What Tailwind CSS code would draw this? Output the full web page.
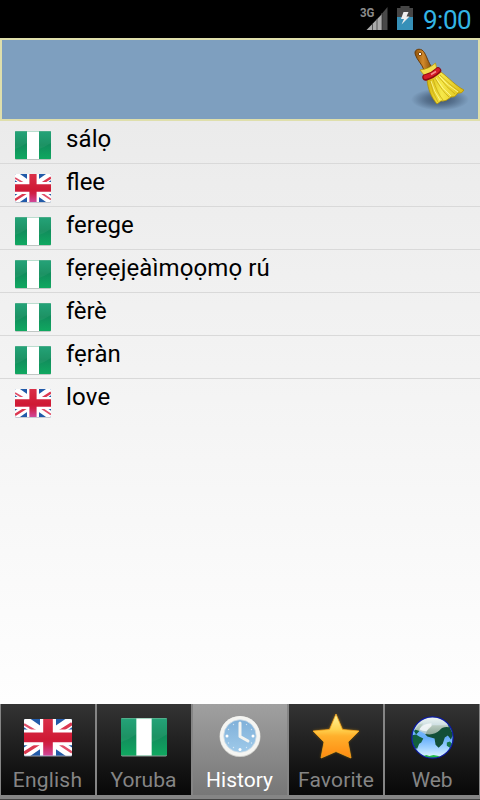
<!DOCTYPE html>
<html lang="en">
<head>
<meta charset="utf-8">
<title>Dictionary</title>
<script src="https://cdn.jsdelivr.net/npm/@tailwindcss/browser@4"></script>
</head>
<body class="w-[480px] h-[800px] overflow-hidden bg-black font-[Roboto,'Noto_Sans',sans-serif]">
<svg class="absolute h-0 w-0" aria-hidden="true">
  <defs>
    <linearGradient id="green" x1="0" y1="0" x2="0" y2="1"><stop offset="0" stop-color="#1a9e72"/><stop offset=".5" stop-color="#118d5c"/><stop offset="1" stop-color="#10a860"/></linearGradient>
    <linearGradient id="red" gradientUnits="userSpaceOnUse" x1="0" y1="0" x2="0" y2="28"><stop offset="0" stop-color="#da3048"/><stop offset=".55" stop-color="#cf1a34"/><stop offset=".7" stop-color="#d02048"/><stop offset="1" stop-color="#d0489a"/></linearGradient>
    <linearGradient id="star" x1="0" y1="0" x2="0" y2="1"><stop offset="0" stop-color="#fff6a0"/><stop offset=".35" stop-color="#ffd24e"/><stop offset=".5" stop-color="#ffb02c"/><stop offset="1" stop-color="#ff8a10"/></linearGradient>
    <linearGradient id="handle" x1="0" y1="0" x2="1" y2="0"><stop offset="0" stop-color="#8f5209"/><stop offset=".5" stop-color="#d28a2c"/><stop offset="1" stop-color="#8f5209"/></linearGradient>
    <linearGradient id="straw" x1="0" y1="0" x2="1" y2="0"><stop offset="0" stop-color="#d8b80c"/><stop offset=".4" stop-color="#f6e94a"/><stop offset="1" stop-color="#dcba10"/></linearGradient>
    <radialGradient id="shade"><stop offset="0" stop-color="#25364c" stop-opacity=".75"/><stop offset=".5" stop-color="#30445e" stop-opacity=".5"/><stop offset="1" stop-color="#30445e" stop-opacity="0"/></radialGradient>
    <linearGradient id="sea" x1="0" y1="0" x2="0" y2="1"><stop offset="0" stop-color="#8fc4fa"/><stop offset=".5" stop-color="#66aefb"/><stop offset=".75" stop-color="#a0d2ff"/><stop offset="1" stop-color="#e6f8ff"/></linearGradient>
    <linearGradient id="gloss" x1="0" y1="0" x2="0" y2="1"><stop offset="0" stop-color="#f4faf4" stop-opacity=".95"/><stop offset="1" stop-color="#c4cec4" stop-opacity=".7"/></linearGradient>
    <linearGradient id="dial" x1="0" y1="0" x2="0" y2="1"><stop offset="0" stop-color="#7fb0d9"/><stop offset="1" stop-color="#9fcaea"/></linearGradient>
    <clipPath id="round"><rect width="36" height="28" rx="1"/></clipPath>
    <clipPath id="globe"><circle cx="21" cy="21" r="20"/></clipPath>
    <filter id="glow" x="-.3" y="-.3" width="1.6" height="1.6"><feGaussianBlur stdDeviation="1.5"/></filter>
  </defs>
  <symbol id="ng" viewBox="0 0 36 29" preserveAspectRatio="none">
    <rect y=".6" width="36" height="28" rx="1" fill="#8d9b95"/>
    <g clip-path="url(#round)"><rect width="36" height="28" fill="url(#green)"/><path d="M0 18Q6 16 12 12V0H0zM24 18Q30 16 36 12V0H24z" fill="#fff" opacity=".05"/><rect x="12" width="12" height="28" fill="#fff"/><rect width="36" height=".8" fill="#6fb79a" opacity=".6"/></g>
  </symbol>
  <symbol id="uk" viewBox="0 0 36 29" preserveAspectRatio="none">
    <rect y=".6" width="36" height="28" rx="1" fill="#999fb0"/>
    <g clip-path="url(#round)"><rect width="36" height="28" fill="#225ba9"/><path d="M-2 0L38 28M38 0L-2 28" stroke="#fff" stroke-width="8"/><path d="M0 4L10 10M36 25.500L27 19.500" stroke="#e0506a" stroke-width="1.800"/><path d="M36 3.500L26 10M0 26L11 19" stroke="#dc3850" stroke-width="2.400"/><path d="M18 0V28M0 14H36" stroke="#fff" stroke-width="12"/><path d="M14.400 0H21.600V28H14.400zM0 10.300H36V17.700H0z" fill="url(#red)"/></g>
  </symbol>
</svg>

<div class="flex h-full flex-col">
  <header class="flex h-[38px] shrink-0 items-start justify-end bg-black pr-[9px]">
    <svg class="mt-1 mr-[8px] h-[28px] w-[29px]" viewBox="0 0 29 28">
      <text x="0" y="13" font-size="13" font-weight="700" textLength="14.500" lengthAdjust="spacingAndGlyphs" fill="#8b8b8b">3G</text>
      <path d="M6.500 26L22 10V26z" fill="#aaa"/><path d="M22.500 9L27.500 3V26H22.500z" fill="#484848"/>
      <path d="M12.500 20V26M17 15V26M22 9V26" stroke="#555" stroke-width="1"/>
    </svg>
    <svg class="mt-[6px] mr-[10px] h-[24px] w-[16px]" viewBox="0 0 16 24">
      <path d="M3.500 0H12.500V2H16V11H0V2H3.500z" fill="#464646"/><path d="M0 11H16V24H0z" fill="#3690b8"/>
      <path d="M6.500 6H11.500L9.500 10.500H12.500L4.500 18.500L7 13H4z" fill="#eee"/>
    </svg>
    <span class="mt-[5px] block w-[48px] whitespace-nowrap text-[26px] leading-[30px] tracking-[-0.5px] text-[#33b5e5]">9:00</span>
  </header>

  <section class="flex h-[83px] shrink-0 justify-end border-2 border-[#dfdfac] bg-[#7e9fbf] pr-[7px]">
    <svg class="mt-[4px] h-[68px] w-[60px]" viewBox="0 0 60 68">
      <ellipse cx="29" cy="55.500" rx="29" ry="11" fill="url(#shade)"/>
      <path d="M4.500 11C2.500 6 7 4 11 6C15 9 16 16 20 22L13 26C11 20 6 16 4.500 11z" fill="url(#handle)" stroke="#6d3d08" stroke-width="1"/>
      <circle cx="9" cy="10" r="1.700" fill="#fff" stroke="#7b4509"/>
      <path d="M9 26Q18 25 24.500 19L26 26Q20 31 13 31z" fill="#f3dd4e" stroke="#b79a09" stroke-width=".8"/>
      <path d="M16 36L30 28C38 34 45 42 53 46Q51 50 47 49Q44 54 40 53Q35 58 30 57L26 60C20 53 17 45 16 36z" fill="url(#straw)" stroke="#b18f06" stroke-width=".8"/>
      <path d="M19 36Q21 49 27 58M22 35Q26 49 32 56M24 34Q31 47 38 53M27 32Q36 44 44 50M29 31Q39 41 49 48" fill="none" stroke="#c9aa14" stroke-width=".8"/>
      <path d="M20 37Q23 48 29 56M25 34Q31 45 40 52M28 32Q37 42 47 48" fill="none" stroke="#fff9a0" stroke-width=".8"/>
      <path d="M14.500 33.500Q22 31.500 27 26.500" fill="none" stroke="#8d0a10" stroke-width="6.500" stroke-linecap="round"/>
      <path d="M14.500 33Q22 31 27 26" fill="none" stroke="#d51c28" stroke-width="4" stroke-linecap="round"/>
      <path d="M20 30.500L25 27.500" stroke="#f78d8d" stroke-width="1.500"/>
    </svg>
  </section>

  <main class="h-[583px] shrink-0 bg-linear-to-b from-[#ebebeb] to-[#fefefe] text-[24px] leading-[28px] text-black">
    <div class="flex h-[43px] border-b border-[#d9d9d9] pl-[15px]"><svg class="mt-[10px] mr-[15px] h-[29px] w-[36px]"><use href="#ng"/></svg><span class="mt-[4px] tracking-[0.1px]">sálọ</span></div>
    <div class="flex h-[43px] border-b border-[#d9d9d9] pl-[15px]"><svg class="mt-[10px] mr-[15px] h-[29px] w-[36px]"><use href="#uk"/></svg><span class="mt-[4px]">flee</span></div>
    <div class="flex h-[43px] border-b border-[#d9d9d9] pl-[15px]"><svg class="mt-[10px] mr-[15px] h-[29px] w-[36px]"><use href="#ng"/></svg><span class="mt-[4px]">ferege</span></div>
    <div class="flex h-[43px] border-b border-[#d9d9d9] pl-[15px]"><svg class="mt-[10px] mr-[15px] h-[29px] w-[36px]"><use href="#ng"/></svg><span class="mt-[4px] tracking-[0.1px]">fẹrẹẹjẹàìmọọmọ rú</span></div>
    <div class="flex h-[43px] border-b border-[#d9d9d9] pl-[15px]"><svg class="mt-[10px] mr-[15px] h-[29px] w-[36px]"><use href="#ng"/></svg><span class="mt-[4px] tracking-[-0.2px]">fèrè</span></div>
    <div class="flex h-[43px] border-b border-[#d9d9d9] pl-[15px]"><svg class="mt-[10px] mr-[15px] h-[29px] w-[36px]"><use href="#ng"/></svg><span class="mt-[4px]">fẹràn</span></div>
    <div class="flex h-[43px] pl-[15px]"><svg class="mt-[10px] mr-[15px] h-[29px] w-[36px]"><use href="#uk"/></svg><span class="mt-[4px] tracking-[0.2px]">love</span></div>
  </main>

  <nav class="grid h-[96px] shrink-0 grid-cols-5 border-b border-[#444] bg-[#858585] pb-[4px] text-[21px] leading-[24px] text-[#858585]">
    <div class="flex flex-col items-center border-x border-[#858585] bg-linear-to-b from-[#343434] to-[#080808]"><svg class="mt-[15px] h-[38px] w-[48px]"><use href="#uk"/></svg><span class="mt-[11px] -ml-px tracking-[0.2px]">English</span></div>
    <div class="flex flex-col items-center border-x border-[#858585] bg-linear-to-b from-[#343434] to-[#080808]"><svg class="mt-[14px] h-[39px] w-[46px]"><use href="#ng"/></svg><span class="mt-[11px] -ml-px">Yoruba</span></div>
    <div class="flex flex-col items-center border-x border-[#858585] bg-linear-to-b from-[#a0a0a0] to-[#777] text-white">
      <svg class="mt-[11px] -ml-px h-[42px] w-[42px]" viewBox="0 0 42 42"><circle cx="21" cy="21.500" r="20.500" fill="#d0d0cc"/><circle cx="21" cy="21" r="20" fill="#f5f5f2"/><circle cx="21" cy="21" r="16.300" fill="url(#dial)" stroke="#d6dfe6" stroke-width=".8"/><path d="M21 8V21.500L29 26" fill="none" stroke="#f4f4f0" stroke-width="3" stroke-linecap="round" stroke-linejoin="round"/><g fill="#fff"><circle cx="8" cy="21" r="1.500"/><circle cx="34" cy="21" r="1.500"/><circle cx="21" cy="34.500" r="1.500"/></g><g fill="#fff" opacity=".6"><circle cx="14.500" cy="9.500" r=".7"/><circle cx="27.500" cy="9.500" r=".7"/><circle cx="9.500" cy="14.500" r=".7"/><circle cx="32.500" cy="14.500" r=".7"/><circle cx="9.500" cy="28" r=".7"/><circle cx="32.500" cy="28" r=".7"/><circle cx="14.500" cy="32.500" r=".7"/><circle cx="27.500" cy="32.500" r=".7"/></g></svg>
      <span class="mt-[11px] -ml-px">History</span></div>
    <div class="flex flex-col items-center border-x border-[#858585] bg-linear-to-b from-[#343434] to-[#080808]">
      <svg class="mt-[8px] h-[48px] w-[50px]" viewBox="0 0 50 48"><path d="M25 2L31.500 17.500L48 19L36 30.500L40 46L25 39L10 46L14 30.500L2 19L18.500 17.500z" fill="#f8a810" opacity=".6" filter="url(#glow)"/><path d="M25 2L31.500 17.500L48 19L37 30L40 46L25 39.500L10 46L13 30L2 19L18.500 17.500z" fill="url(#star)" stroke="#f9a51c" stroke-width=".8" stroke-linejoin="round"/></svg>
      <span class="mt-[8px] tracking-[0.15px]">Favorite</span></div>
    <div class="flex flex-col items-center border-x border-[#858585] bg-linear-to-b from-[#343434] to-[#080808]">
      <svg class="mt-[12px] h-[43px] w-[43px]" viewBox="0 0 42 42"><circle cx="21" cy="21" r="20" fill="url(#sea)"/><g clip-path="url(#globe)"><path d="M0 19L5 18L8 20L12 22L10 26L8 27L6 32L3 31L0 26zM3 15L8 8L12 7L9 12L8 15L5 18z" fill="#12603e"/><path d="M15 16L17 11L21 9L37 9L41 18L39 23L36 19L33 21L31 27L27 31L24 28L23 22L16 20L14 18z" fill="#124f38"/><path d="M35 26L38 25L40 27L38 31L35 29z" fill="#16784a"/><path d="M12 39L15 38L18 39L22 38L27 39L28 42H12z" fill="#25bd48"/><path d="M3 13Q8 1 21 1Q34 1 37 11Q31 10 28 14Q24 18 18 18Q13 18 9 15Q6 14 3 13z" fill="url(#gloss)"/><path d="M8 13Q12 7 20 7L20 10L15 15Q11 15 8 13z" fill="#fff" opacity=".7"/></g><circle cx="21" cy="21" r="20.200" fill="none" stroke="#0d1ba5" stroke-width="1.200"/></svg>
      <span class="mt-[9px]">Web</span></div>
  </nav>
</div>
</body>
</html>
